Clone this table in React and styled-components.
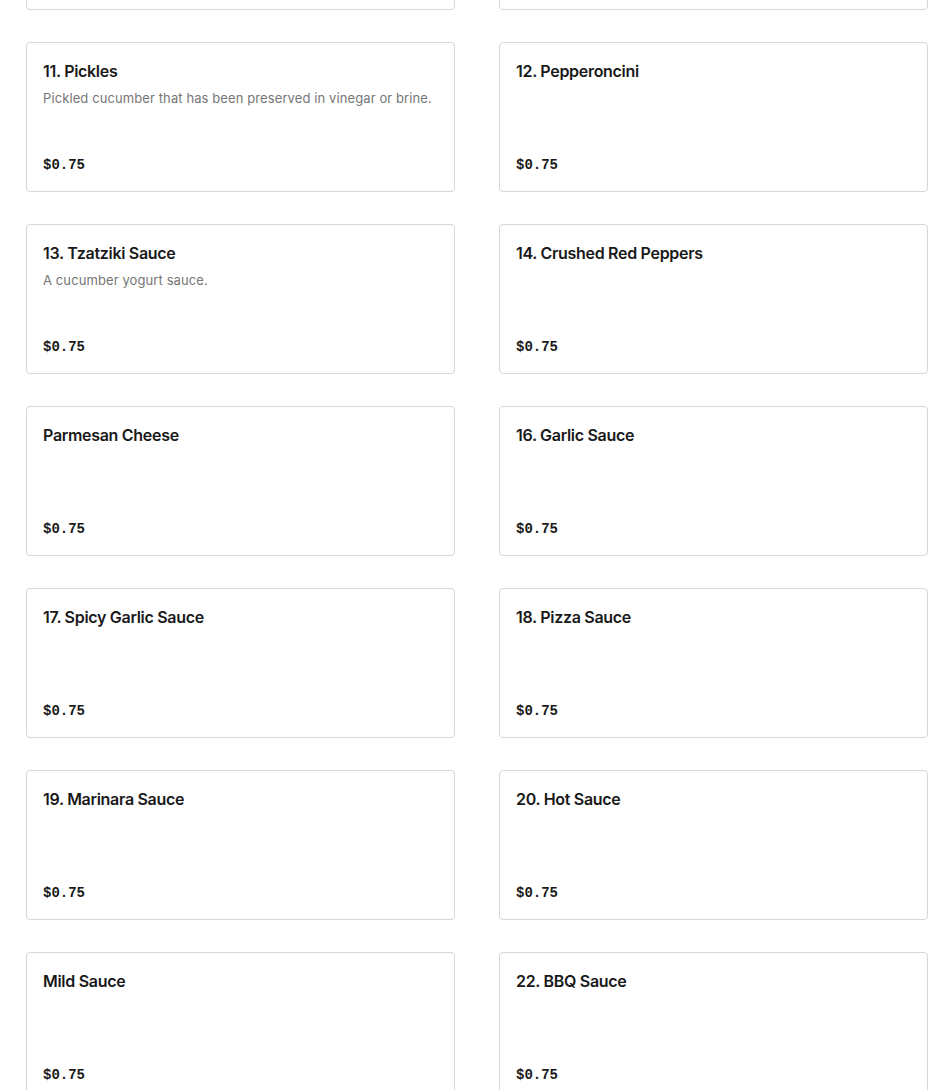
import styled, { createGlobalStyle } from 'styled-components'

const GlobalStyle = createGlobalStyle`
   html, body {
      margin: 0;
      padding: 0;
      background: #fff;
      overflow: hidden;
   }
   body {
      font-family: 'Inter', 'Liberation Sans', sans-serif;
      color: #191919;
   }
`

const Grid = styled.div`
   display: grid;
   grid-template-columns: 429px 429px;
   column-gap: 44px;
   row-gap: 32px;
   padding: 0 22px 0 26px;
   margin-top: -140px;
`

const Card = styled.div`
   box-sizing: border-box;
   display: flex;
   flex-direction: column;
   height: 150px;
   padding: 15px 16px 16px 16px;
   border: 1px solid #d6d6d6;
   border-radius: 4px;
   background: #fff;
`

const Title = styled.h3`
   margin: 0;
   font-size: 16px;
   font-weight: 600;
   line-height: 26px;
   color: #191919;
   letter-spacing: -0.3px;
`

const Description = styled.p`
   margin: 4px 0 0;
   font-size: 13px;
   line-height: 20px;
   color: #767676;
   letter-spacing: 0.1px;
`

const Price = styled.span`
   margin-top: auto;
   font-family: 'Liberation Mono', 'DejaVu Sans Mono', monospace;
   font-size: 14px;
   font-weight: 700;
   line-height: 20px;
   color: #191919;
`

const items = [
   { name: '9. Olives' },
   { name: '10. Onions' },
   { name: '11. Pickles', desc: 'Pickled cucumber that has been preserved in vinegar or brine.' },
   { name: '12. Pepperoncini' },
   { name: '13. Tzatziki Sauce', desc: 'A cucumber yogurt sauce.' },
   { name: '14. Crushed Red Peppers' },
   { name: 'Parmesan Cheese' },
   { name: '16. Garlic Sauce' },
   { name: '17. Spicy Garlic Sauce' },
   { name: '18. Pizza Sauce' },
   { name: '19. Marinara Sauce' },
   { name: '20. Hot Sauce' },
   { name: 'Mild Sauce' },
   { name: '22. BBQ Sauce' },
]

export default function App() {
   return (
      <>
         <GlobalStyle />
         <Grid>
            {items.map(item => (
               <Card key={item.name}>
                  <Title>{item.name}</Title>
                  {item.desc && <Description>{item.desc}</Description>}
                  <Price>$0.75</Price>
               </Card>
            ))}
         </Grid>
      </>
   )
}
